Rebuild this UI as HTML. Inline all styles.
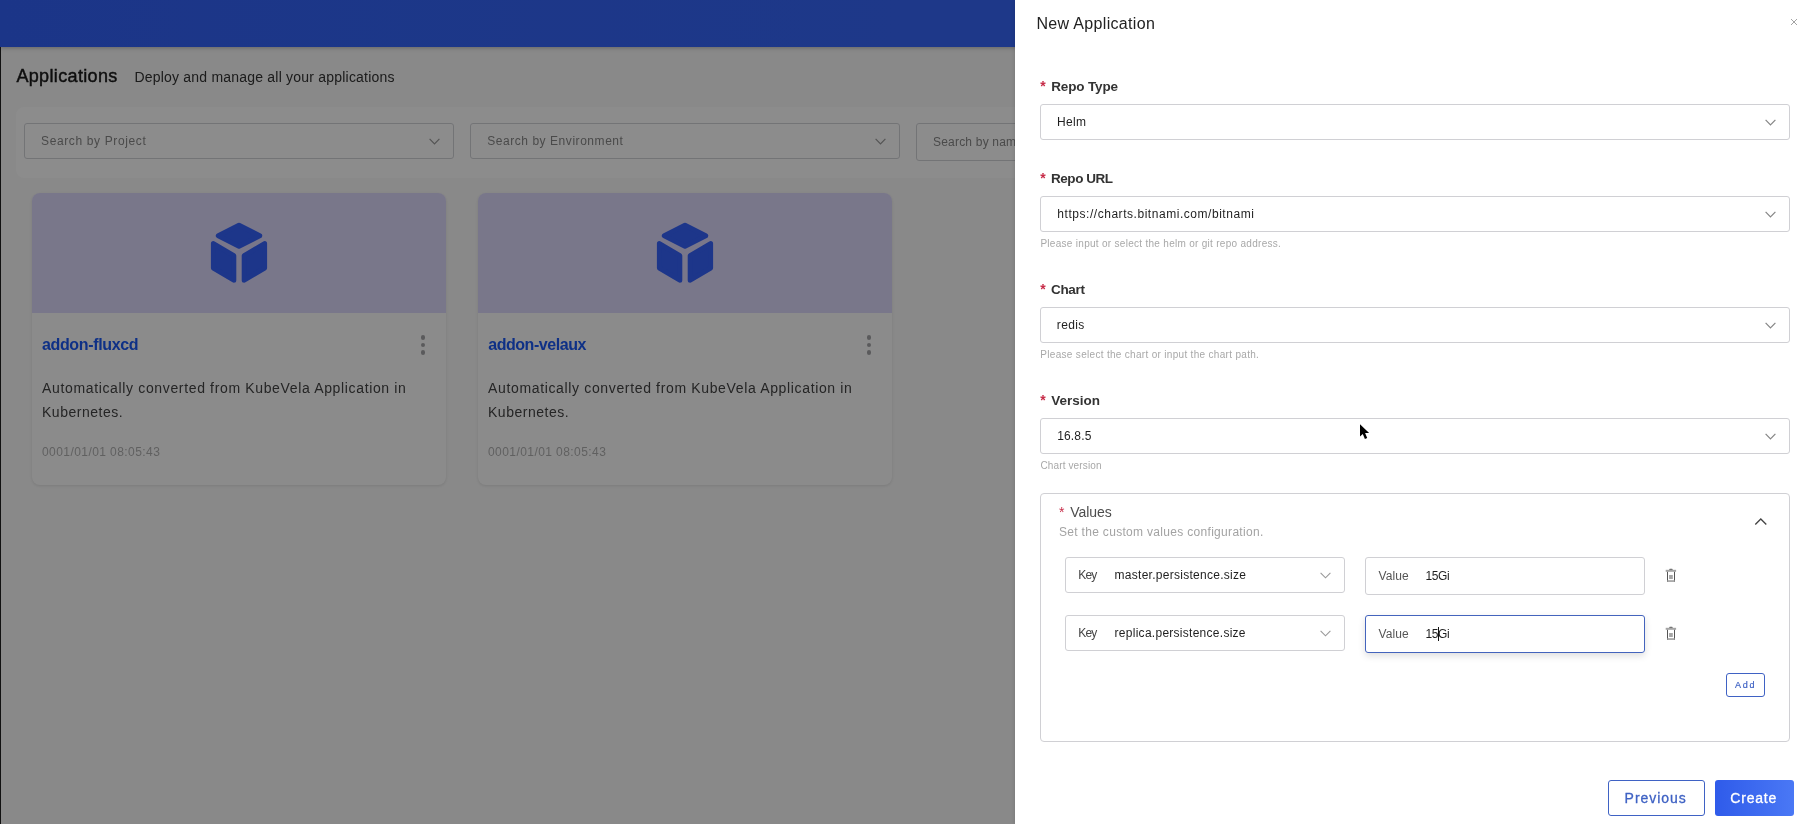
<!DOCTYPE html>
<html lang="en">
<head>
<meta charset="utf-8">
<title>Applications</title>
<style>
*{box-sizing:border-box;margin:0;padding:0}
html,body{width:1808px;height:824px;overflow:hidden;background:#fff;font-family:"Liberation Sans",sans-serif;color:#333}
.t{position:absolute;white-space:nowrap}
#page{will-change:transform;position:absolute;left:0;top:0;width:1808px;height:824px;background:#f9f9f9;overflow:hidden}
#topbar{position:absolute;left:0;top:0;width:1808px;height:47px;background:linear-gradient(90deg,#3262f8,#3c6bfa);box-shadow:0 1px 4px rgba(0,0,0,.25)}
#ptitle{left:16px;top:64px;font-size:18px;line-height:24px;font-weight:normal;color:#1a1a1a;-webkit-text-stroke:.45px #1a1a1a}
#psub{left:134px;top:66px;font-size:14px;line-height:22px;color:#333}
#filter{position:absolute;left:16px;top:107px;width:1784px;height:71px;border-radius:8px;background:#fff}
.fsel{position:absolute;top:16px;width:430px;height:36px;border:1px solid #d2d3d8;border-radius:3px}
.fsel .t{left:16px;top:0;font-size:12px;line-height:34px;color:#888}
.fsel svg{position:absolute;right:13px;top:14px}
.card{position:absolute;top:193px;width:414px;height:292px;border-radius:8px;background:#fdfdfe;box-shadow:0 1px 3px rgba(0,0,0,.10);overflow:hidden}
.card .img{position:absolute;left:0;top:0;width:414px;height:120px;background:#ddd9fc}
.card .img svg{position:absolute;left:177px;top:28px}
.card .name{left:10px;top:140px;font-size:16px;line-height:22px;font-weight:bold;color:#1b58f4}
.card .desc{left:10px;font-size:14px;line-height:24px;color:#444}
.card .date{left:10px;top:251px;font-size:12px;line-height:16px;color:#b0b0b0}
.card .dots{position:absolute;left:388.7px;top:142.25px;width:4.5px}
.card .dots b{display:block;width:4.5px;height:4.5px;border-radius:50%;background:#a4a4a8;margin-bottom:2.9px}
#mask{position:absolute;left:0;top:0;width:1808px;height:824px;background:rgba(0,0,0,.45)}
#edge{position:absolute;left:0;top:47px;width:1px;height:777px;background:#111}
#drawer{will-change:transform;position:absolute;left:1015px;top:0;width:793px;height:824px;background:#fff;box-shadow:-1px 0 3px rgba(0,0,0,.10)}
#dtitle{left:21px;top:12px;font-size:16px;line-height:22px;color:#222}
#close{position:absolute;left:775.2px;top:18.4px}
.lbl{left:36px;font-size:13.5px;line-height:20px;font-weight:bold;color:#333}
.star{left:25.3px;font-size:14px;line-height:20px;color:#c72c48;font-weight:bold}
.sel{position:absolute;left:25px;width:750px;height:36px;border:1px solid #d0d0d4;border-radius:3px}
.sel .t{left:16px;top:0;font-size:12px;line-height:34px;color:#1f1f1f}
.sel svg{position:absolute;right:13.5px;top:13.5px}
.help{left:25px;font-size:10px;line-height:14px;color:#a8a8a8}
#vals{position:absolute;left:25px;top:493px;width:750px;height:249px;border:1px solid #d0d0d4;border-radius:4px}
#vtitle{left:29px;top:8px;font-size:14px;line-height:20px;color:#4d4d4d}
#vstar{left:18px;top:8px;font-size:14px;line-height:20px;color:#c72c48}
#vsub{left:18px;top:29px;font-size:12px;line-height:16px;color:#a3a3a3}
#vchev{position:absolute;left:713px;top:23px}
.ksel{position:absolute;left:24px;width:280px;height:36px;border:1px solid #d0d0d4;border-radius:3px}
.ksel .k{left:12px;top:0;font-size:12px;line-height:34px;color:#444}
.ksel .v{left:48px;top:0;font-size:12px;line-height:34px;color:#1f1f1f}
.ksel svg{position:absolute;right:13px;top:14px}
.vin{position:absolute;left:324px;width:280px;height:38px;border:1px solid #d0d0d4;border-radius:3px}
.vin .k{left:12px;top:0;font-size:12px;line-height:36px;color:#555}
.vin .v{left:59px;top:0;font-size:12px;line-height:36px;color:#1f1f1f}
.vin.focus{border-color:#4464bd;box-shadow:0 3px 7px rgba(0,0,0,.13)}
.trash{position:absolute;left:624px;margin-top:-.5px}
#add{position:absolute;left:685px;top:179px;width:39px;height:24px;border:1px solid #3f62c4;border-radius:3px}
#add .t{left:8px;top:0;font-size:9px;line-height:22px;color:#3f62c4;-webkit-text-stroke:.2px #3f62c4}
#prev{position:absolute;left:593px;top:780px;width:97px;height:36px;border:1px solid #3f62c4;border-radius:3px;background:#fff}
#prev .t{left:16px;top:0;font-size:14px;line-height:34px;color:#3f62c4;-webkit-text-stroke:.3px #3f62c4}
#create{position:absolute;left:700px;top:780px;width:79px;height:36px;border-radius:3px;background:linear-gradient(90deg,#2f5bea,#4a78f5)}
#create .t{left:15px;top:0;font-size:14px;line-height:36px;color:#fff;-webkit-text-stroke:.3px #fff}
#caret{position:absolute;left:423px;top:627px;width:1px;height:14px;background:#111}
#cursor{position:absolute;left:343px;top:422px}
/*FIT*/
#ptitle#ptitle{left:16.4px;top:64px!important;letter-spacing:0.35px}
#psub#psub{left:134.4px;top:66px!important;letter-spacing:0.21px}
#f1#f1{left:16.0px;top:0px!important;letter-spacing:0.63px}
#f2#f2{left:16.2px;top:0px!important;letter-spacing:0.55px}
#f3#f3{left:16.0px;top:0px!important;letter-spacing:0.20px}
#n1#n1{left:10.0px;top:141px!important;letter-spacing:-0.36px}
#n2#n2{left:10.2px;top:141px!important;letter-spacing:-0.45px}
#d1a#d1a{left:10.0px;top:183px!important;letter-spacing:0.65px}
#d1b#d1b{left:10.0px;top:207px!important;letter-spacing:0.52px}
#d2a#d2a{left:10.0px;top:183px!important;letter-spacing:0.65px}
#d2b#d2b{left:10.0px;top:207px!important;letter-spacing:0.52px}
#dt1#dt1{left:10.0px;top:251px!important;letter-spacing:0.43px}
#dt2#dt2{left:10.0px;top:251px!important;letter-spacing:0.43px}
#dtitle#dtitle{left:21.5px;top:13px!important;letter-spacing:0.32px}
#l1#l1{left:36.2px;top:77px!important;letter-spacing:-0.15px}
#l2#l2{left:36.0px;top:169px!important;letter-spacing:-0.45px}
#l3#l3{left:36.0px;top:280px!important;letter-spacing:-0.33px}
#l4#l4{left:36.2px;top:391px!important;letter-spacing:0.00px}
#s1#s1{left:16.0px;top:0px!important;letter-spacing:0.35px}
#s2#s2{left:16.3px;top:0px!important;letter-spacing:0.54px}
#s3#s3{left:15.8px;top:0px!important;letter-spacing:0.35px}
#s4#s4{left:16.2px;top:0px!important;letter-spacing:0.15px}
#h1#h1{left:25.4px;top:237px!important;letter-spacing:0.29px}
#h2#h2{left:25.3px;top:348px!important;letter-spacing:0.31px}
#h3#h3{left:25.4px;top:459px!important;letter-spacing:0.14px}
#vtitle#vtitle{left:29.3px;top:8px!important;letter-spacing:-0.05px}
#vsub#vsub{left:18.0px;top:30px!important;letter-spacing:0.31px}
#k1#k1{left:12.3px;top:0px!important;letter-spacing:-0.90px}
#kv1#kv1{left:48.6px;top:0px!important;letter-spacing:0.27px}
#k2#k2{left:12.3px;top:0px!important;letter-spacing:-0.90px}
#kv2#kv2{left:48.6px;top:0px!important;letter-spacing:0.27px}
#vk1#vk1{left:12.6px;top:0px!important;letter-spacing:0.05px}
#vv1#vv1{left:59.5px;top:0px!important;letter-spacing:-0.41px}
#vk2#vk2{left:12.6px;top:0px!important;letter-spacing:0.05px}
#vv2#vv2{left:59.5px;top:0px!important;letter-spacing:-0.41px}
#addt#addt{left:8.0px;top:0px!important;letter-spacing:1.70px}
#pt#pt{left:15.6px;top:0px!important;letter-spacing:0.95px}
#ct#ct{left:15.3px;top:0px!important;letter-spacing:0.80px}
/*ENDFIT*/
</style>
</head>
<body>
<div id="page">
  <div id="topbar"></div>
  <div class="t" id="ptitle">Applications</div>
  <div class="t" id="psub">Deploy and manage all your applications</div>
  <div id="filter">
    <div class="fsel" style="left:8px"><span class="t" id="f1">Search by Project</span><svg width="11" height="7" viewBox="0 0 11 7"><path d="M.6.8l4.9 5 4.9-5" fill="none" stroke="#999" stroke-width="1.2"/></svg></div>
    <div class="fsel" style="left:454px"><span class="t" id="f2">Search by Environment</span><svg width="11" height="7" viewBox="0 0 11 7"><path d="M.6.8l4.9 5 4.9-5" fill="none" stroke="#999" stroke-width="1.2"/></svg></div>
    <div class="fsel" style="left:900px;height:38px"><span class="t" id="f3" style="line-height:36px">Search by name and description etc</span></div>
  </div>
  <div class="card" style="left:32px">
    <div class="img"><svg width="60" height="64" viewBox="0 0 60 64"><g fill="#3563fc" stroke="#3563fc" stroke-width="5" stroke-linejoin="round"><path d="M30 4.2L50.7 14.75L30 25.3L9.3 14.75Z"/><path d="M4.4 22.6L24.8 34.7V59.2L4.4 47.1Z"/><path d="M55.6 22.6L35.2 34.7V59.2L55.6 47.1Z"/></g></svg></div>
    <span class="t name" id="n1">addon-fluxcd</span>
    <div class="dots"><b></b><b></b><b></b></div>
    <span class="t desc" id="d1a" style="top:183px">Automatically converted from KubeVela Application in</span>
    <span class="t desc" id="d1b" style="top:207px">Kubernetes.</span>
    <span class="t date" id="dt1">0001/01/01 08:05:43</span>
  </div>
  <div class="card" style="left:478px">
    <div class="img"><svg width="60" height="64" viewBox="0 0 60 64"><g fill="#3563fc" stroke="#3563fc" stroke-width="5" stroke-linejoin="round"><path d="M30 4.2L50.7 14.75L30 25.3L9.3 14.75Z"/><path d="M4.4 22.6L24.8 34.7V59.2L4.4 47.1Z"/><path d="M55.6 22.6L35.2 34.7V59.2L55.6 47.1Z"/></g></svg></div>
    <span class="t name" id="n2">addon-velaux</span>
    <div class="dots"><b></b><b></b><b></b></div>
    <span class="t desc" id="d2a" style="top:183px">Automatically converted from KubeVela Application in</span>
    <span class="t desc" id="d2b" style="top:207px">Kubernetes.</span>
    <span class="t date" id="dt2">0001/01/01 08:05:43</span>
  </div>
</div>
<div id="mask"></div>
<div id="edge"></div>
<div id="drawer">
  <span class="t" id="dtitle">New Application</span>
  <svg id="close" width="8" height="8" viewBox="0 0 8 8"><path d="M1 1l6 6M7 1l-6 6" stroke="#999" stroke-width=".9" fill="none"/></svg>

  <span class="t star" style="top:76px">*</span><span class="t lbl" id="l1" style="top:76px">Repo Type</span>
  <div class="sel" style="top:104px"><span class="t" id="s1">Helm</span><svg width="11" height="7" viewBox="0 0 11 7"><path d="M.6.8l4.9 5 4.9-5" fill="none" stroke="#858585" stroke-width="1.2"/></svg></div>

  <span class="t star" style="top:168px">*</span><span class="t lbl" id="l2" style="top:168px">Repo URL</span>
  <div class="sel" style="top:196px"><span class="t" id="s2">https://charts.bitnami.com/bitnami</span><svg width="11" height="7" viewBox="0 0 11 7"><path d="M.6.8l4.9 5 4.9-5" fill="none" stroke="#858585" stroke-width="1.2"/></svg></div>
  <span class="t help" id="h1" style="top:237px">Please input or select the helm or git repo address.</span>

  <span class="t star" style="top:279px">*</span><span class="t lbl" id="l3" style="top:279px">Chart</span>
  <div class="sel" style="top:307px"><span class="t" id="s3">redis</span><svg width="11" height="7" viewBox="0 0 11 7"><path d="M.6.8l4.9 5 4.9-5" fill="none" stroke="#858585" stroke-width="1.2"/></svg></div>
  <span class="t help" id="h2" style="top:348px">Please select the chart or input the chart path.</span>

  <span class="t star" style="top:390px">*</span><span class="t lbl" id="l4" style="top:390px">Version</span>
  <div class="sel" style="top:418px"><span class="t" id="s4">16.8.5</span><svg width="11" height="7" viewBox="0 0 11 7"><path d="M.6.8l4.9 5 4.9-5" fill="none" stroke="#858585" stroke-width="1.2"/></svg></div>
  <span class="t help" id="h3" style="top:459px">Chart version</span>

  <div id="vals">
    <span class="t" id="vstar">*</span><span class="t" id="vtitle">Values</span>
    <span class="t" id="vsub">Set the custom values configuration.</span>
    <svg id="vchev" width="14" height="9" viewBox="0 0 14 9"><path d="M1.3 7.5l5.5-5.5 5.5 5.5" fill="none" stroke="#444" stroke-width="1.35"/></svg>

    <div class="ksel" style="top:63px"><span class="t k" id="k1">Key</span><span class="t v" id="kv1">master.persistence.size</span><svg width="11" height="7" viewBox="0 0 11 7"><path d="M.6.8l4.9 5 4.9-5" fill="none" stroke="#999" stroke-width="1.1"/></svg></div>
    <div class="vin" style="top:63px"><span class="t k" id="vk1">Value</span><span class="t v" id="vv1">15Gi</span></div>
    <svg class="trash" style="top:74px" width="12" height="14" viewBox="0 0 12 14"><rect x="4.2" y=".8" width="3.5" height="1.4" rx=".7" fill="#6a6a6a"/><rect x=".7" y="1.8" width="10.4" height="2" fill="#a4a4a4"/><rect x="2" y="3.8" width="1" height="10" fill="#555"/><rect x="9" y="3.8" width="1" height="10" fill="#555"/><rect x="2" y="12.3" width="8" height="1.5" fill="#969696"/><rect x="4.1" y="7" width="3.7" height="4" fill="#a5a5a5"/></svg>

    <div class="ksel" style="top:121px"><span class="t k" id="k2">Key</span><span class="t v" id="kv2">replica.persistence.size</span><svg width="11" height="7" viewBox="0 0 11 7"><path d="M.6.8l4.9 5 4.9-5" fill="none" stroke="#999" stroke-width="1.1"/></svg></div>
    <div class="vin focus" style="top:121px"><span class="t k" id="vk2">Value</span><span class="t v" id="vv2">15Gi</span></div>
    <svg class="trash" style="top:132px" width="12" height="14" viewBox="0 0 12 14"><rect x="4.2" y=".8" width="3.5" height="1.4" rx=".7" fill="#6a6a6a"/><rect x=".7" y="1.8" width="10.4" height="2" fill="#a4a4a4"/><rect x="2" y="3.8" width="1" height="10" fill="#555"/><rect x="9" y="3.8" width="1" height="10" fill="#555"/><rect x="2" y="12.3" width="8" height="1.5" fill="#969696"/><rect x="4.1" y="7" width="3.7" height="4" fill="#a5a5a5"/></svg>

    <div id="add"><span class="t" id="addt">Add</span></div>
  </div>
  <div id="caret"></div>
  <svg id="cursor" width="14" height="20" viewBox="0 0 14 20"><path d="M2 2.3v12.2l2.8-2.5 2.1 4.9 2.3-1-2.1-4.8h4z" fill="#000" stroke="#fff" stroke-width=".8" paint-order="stroke"/></svg>

  <div id="prev"><span class="t" id="pt">Previous</span></div>
  <div id="create"><span class="t" id="ct">Create</span></div>
</div>
</body>
</html>
